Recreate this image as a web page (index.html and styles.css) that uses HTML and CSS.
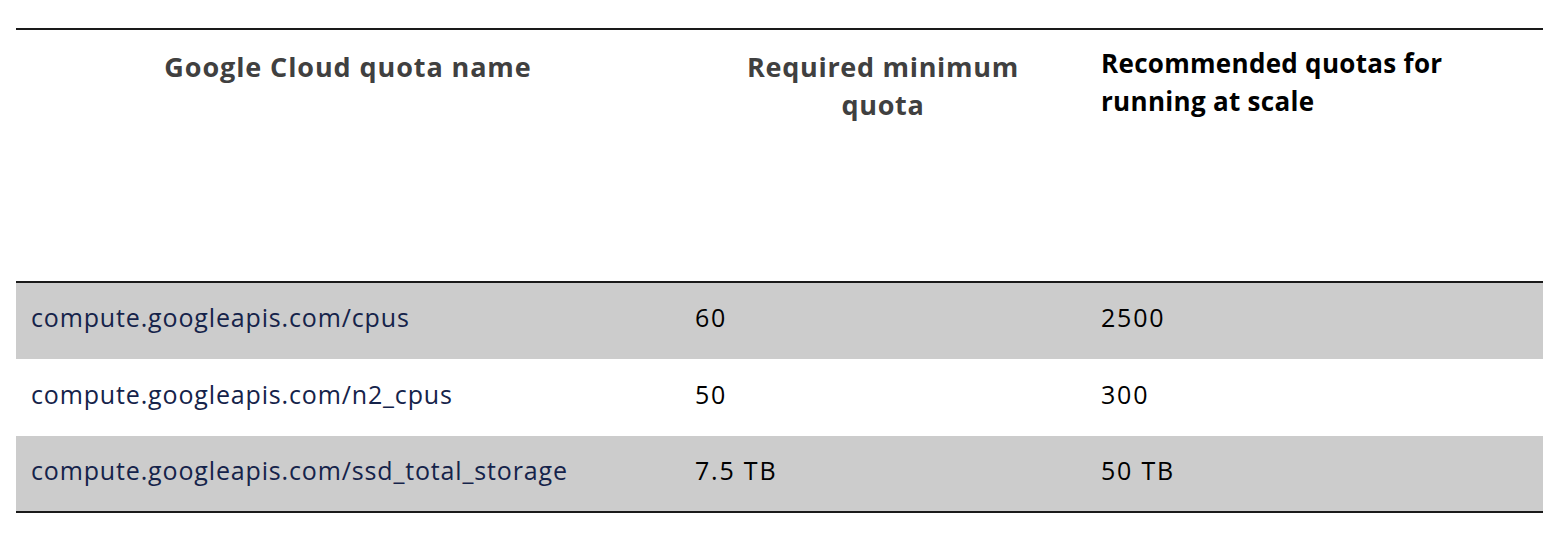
FILE: index.html
```html
<!DOCTYPE html>
<html lang="en">
<head>
<meta charset="utf-8">
<title>Quotas</title>
<link rel="stylesheet" href="styles.css">
</head>
<body>
<table class="quota-table">
  <colgroup>
    <col class="c1">
    <col class="c2">
    <col class="c3">
  </colgroup>
  <thead>
    <tr class="head-row">
      <th class="h-name">Google Cloud quota name</th>
      <th class="h-min">Required minimum<br>quota</th>
      <th class="h-rec">Recommended quotas for<br>running at scale</th>
    </tr>
  </thead>
  <tbody>
    <tr class="shaded r1">
      <td class="name">compute.googleapis.com/cpus</td>
      <td class="num">60</td>
      <td class="num">2500</td>
    </tr>
    <tr class="r2">
      <td class="name">compute.googleapis.com/n2_cpus</td>
      <td class="num">50</td>
      <td class="num">300</td>
    </tr>
    <tr class="shaded r3">
      <td class="name">compute.googleapis.com/ssd_total_storage</td>
      <td class="num">7.5 TB</td>
      <td class="num">50 TB</td>
    </tr>
  </tbody>
</table>
</body>
</html>
```

FILE: styles.css
```css
html, body {
  margin: 0;
  padding: 0;
  background: #ffffff;
}
body {
  padding: 28px 15px 0 16px;
  font-family: "Open Sans", "Liberation Sans", sans-serif;
}
.quota-table {
  width: 1527px;
  border-collapse: collapse;
  table-layout: fixed;
  border-top: 2px solid #1a1a1a;
  border-bottom: 2px solid #1a1a1a;
}
.c1 { width: 664px; }
.c2 { width: 406px; }
.c3 { width: 457px; }
.head-row { height: 253px; }
thead th {
  vertical-align: top;
  font-weight: 700;
  font-size: 27px;
  line-height: 38px;
  letter-spacing: 0.7px;
  border-bottom: 2px solid #1a1a1a;
  padding: 0;
}
.h-name, .h-min {
  color: #404040;
  text-align: center;
  padding-top: 18px;
}
.h-name {
  letter-spacing: 0.9px;
}
.h-rec {
  color: #000000;
  text-align: left;
  font-size: 26px;
  letter-spacing: 0.3px;
  padding-top: 14px;
  padding-left: 15px;
}
.r1, .r2 { height: 77px; }
.r3 { height: 76px; }
tbody td {
  padding: 0 0 8px 15px;
  font-size: 25px;
  letter-spacing: 0.85px;
  color: #000000;
  vertical-align: middle;
}
tbody td.num {
  letter-spacing: 1.8px;
}
tbody td.name {
  color: #15234a;
}
tr.shaded td {
  background: #cccccc;
}
```
